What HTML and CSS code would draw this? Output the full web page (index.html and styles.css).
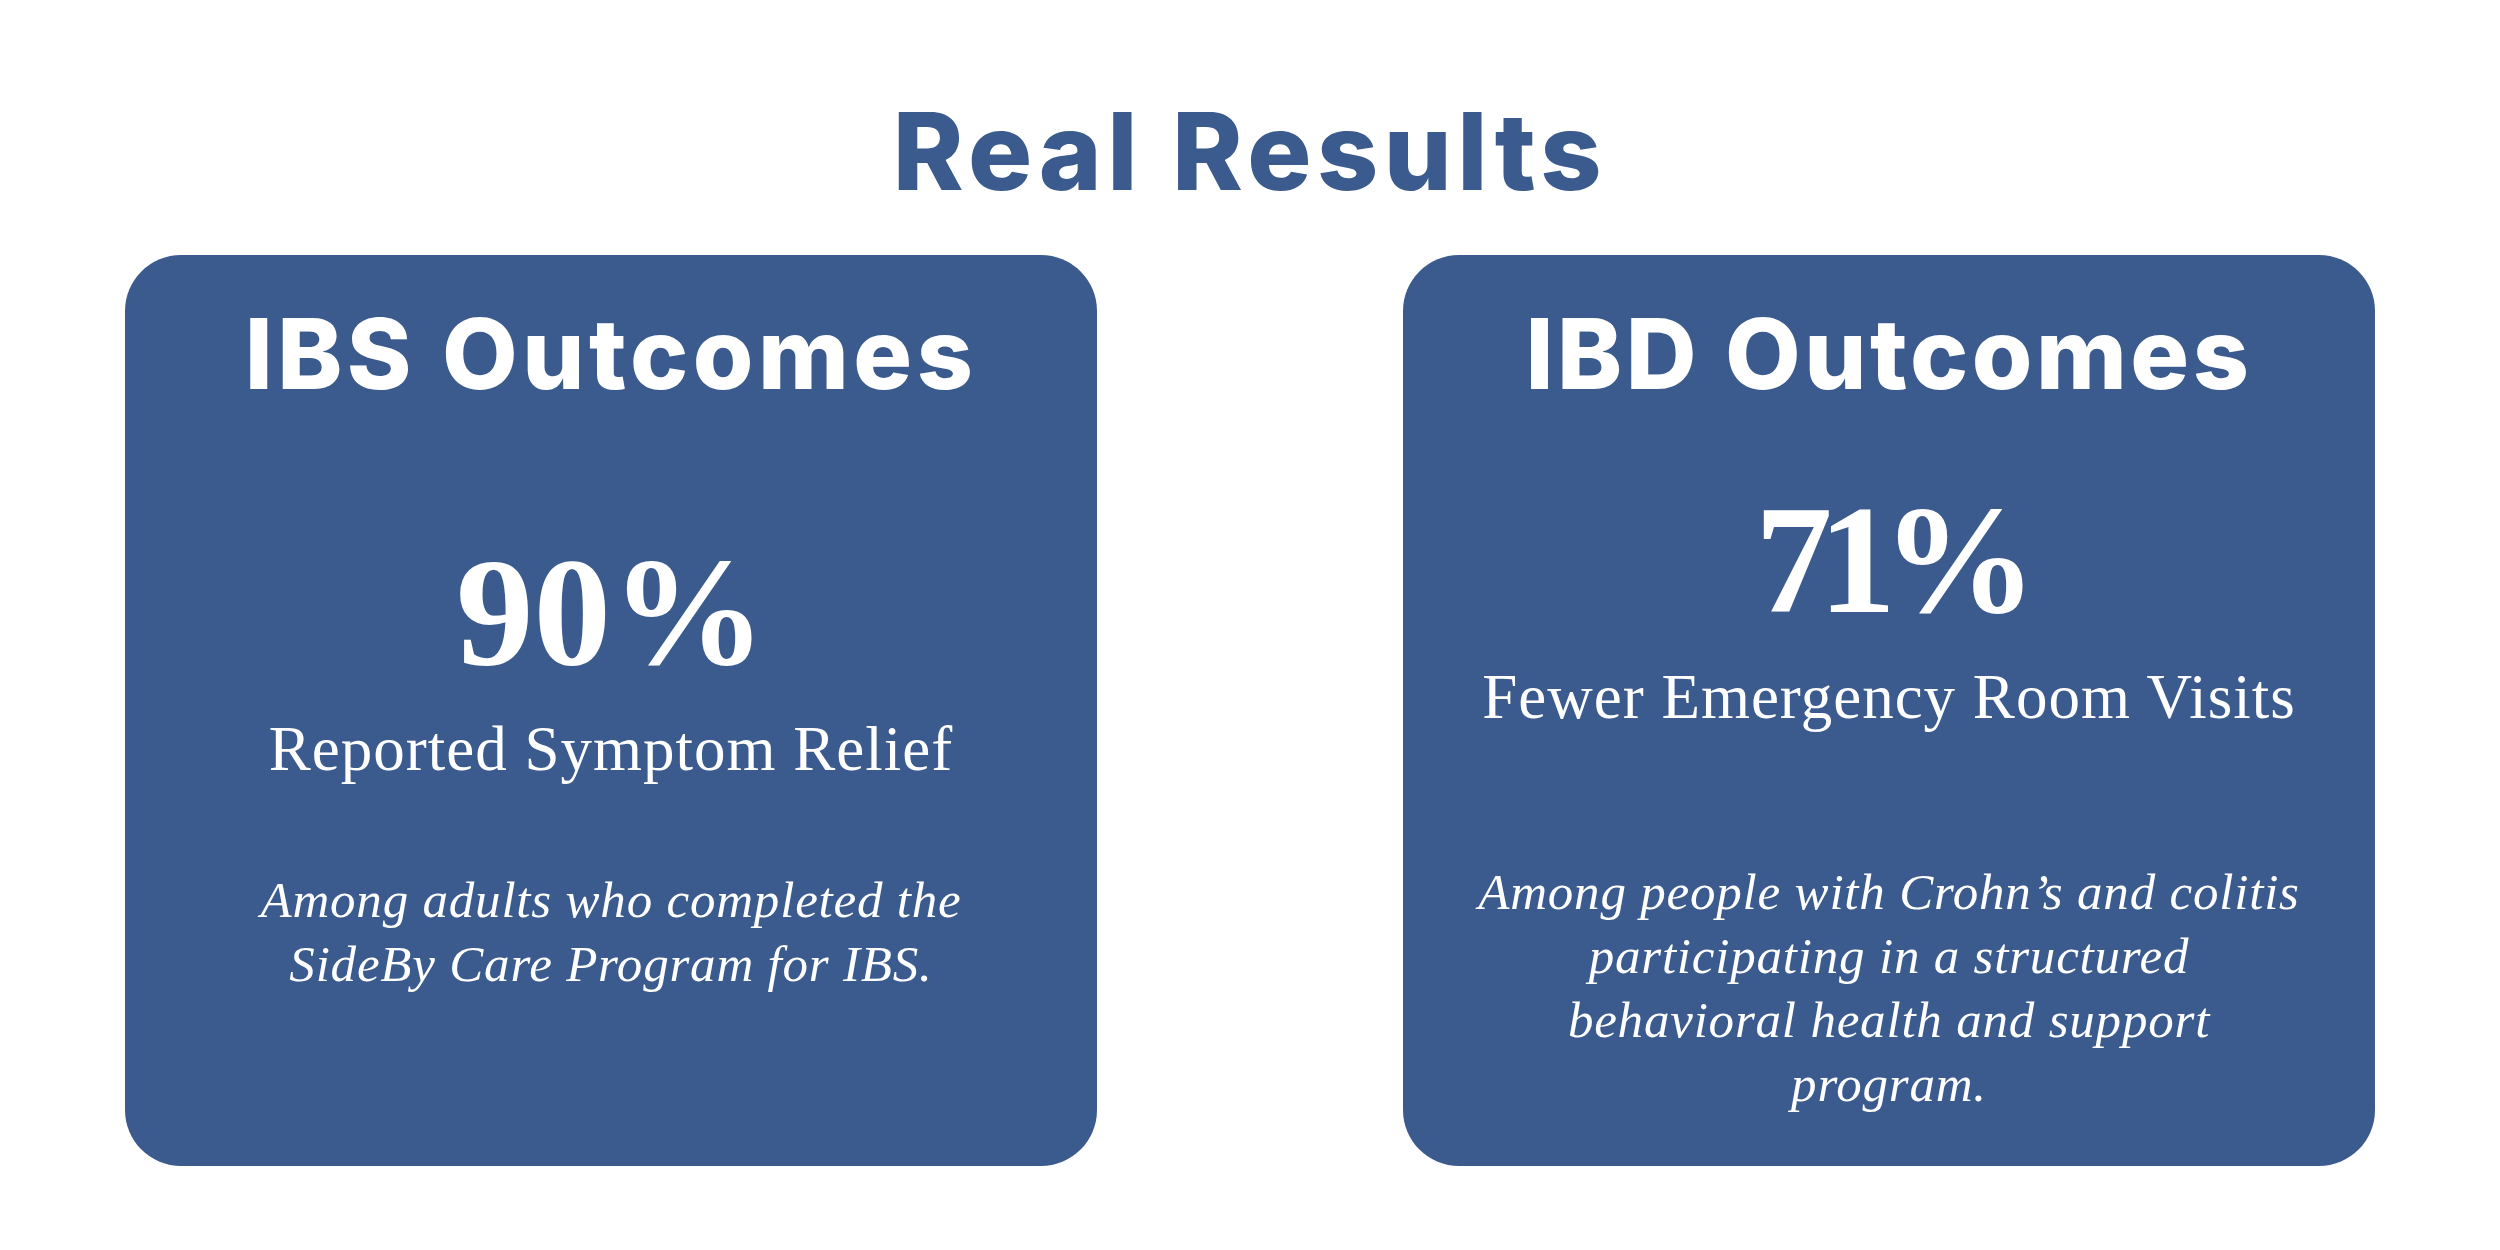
FILE: index.html
```html
<!DOCTYPE html>
<html lang="en">
<head>
<meta charset="utf-8">
<title>Real Results</title>
<link rel="stylesheet" href="styles.css">
</head>
<body>
<main class="page">
  <h1 class="title">Real Results</h1>
  <section class="cards">
    <article class="card card--ibs">
      <h2 class="card-title">IBS Outcomes</h2>
      <p class="stat">90%</p>
      <p class="stat-label">Reported Symptom Relief</p>
      <p class="note">Among adults who completed the<br>SideBy Care Program for IBS.</p>
    </article>
    <article class="card card--ibd">
      <h2 class="card-title card-title--narrow">IBD Outcomes</h2>
      <p class="stat stat--tight">71%</p>
      <p class="stat-label">Fewer Emergency Room Visits</p>
      <p class="note">Among people with Crohn’s and colitis<br>participating in a structured<br>behavioral health and support<br>program.</p>
    </article>
  </section>
</main>
</body>
</html>
```

FILE: styles.css
```css
html, body {
  margin: 0;
  padding: 0;
  background: #ffffff;
}

.page {
  width: 2500px;
  height: 1250px;
  box-sizing: border-box;
  padding-top: 98px;
  display: flex;
  flex-direction: column;
  align-items: center;
}

.title {
  margin: 0;
  font-family: "Inter", "Liberation Sans", sans-serif;
  font-weight: 800;
  font-size: 107px;
  line-height: 107px;
  letter-spacing: 5.5px;
  color: #3b5a8e;
  text-align: center;
}

.cards {
  margin-top: 50px;
  display: flex;
  justify-content: center;
  gap: 306px;
}

.card {
  width: 972px;
  height: 911px;
  box-sizing: border-box;
  padding-top: 50px;
  border-radius: 56px;
  background: #3b5a8e;
  color: #ffffff;
  display: flex;
  flex-direction: column;
  align-items: center;
  text-align: center;
}

.card-title {
  margin: 0;
  font-family: "Inter", "Liberation Sans", sans-serif;
  font-weight: 800;
  font-size: 98px;
  line-height: 98px;
  letter-spacing: 4.5px;
}

.card-title--narrow {
  letter-spacing: 3.5px;
}

.stat {
  margin: 132px 0 0;
  font-family: "Liberation Serif", "DejaVu Serif", serif;
  font-weight: 700;
  font-size: 155px;
  line-height: 155px;
}

.stat--tight {
  letter-spacing: -14px;
}

.card--ibd .stat {
  margin-top: 80px;
}

.stat-label {
  margin: 28px 0 0;
  font-family: "Liberation Serif", "DejaVu Serif", serif;
  font-weight: 400;
  font-size: 63px;
  line-height: 62px;
  letter-spacing: 1px;
}

.note {
  margin: 88px 0 0;
  font-family: "Liberation Serif", "DejaVu Serif", serif;
  font-style: italic;
  font-size: 51px;
  line-height: 64px;
  letter-spacing: 0.8px;
}

.card--ibd .note {
  margin-top: 132px;
}
```
